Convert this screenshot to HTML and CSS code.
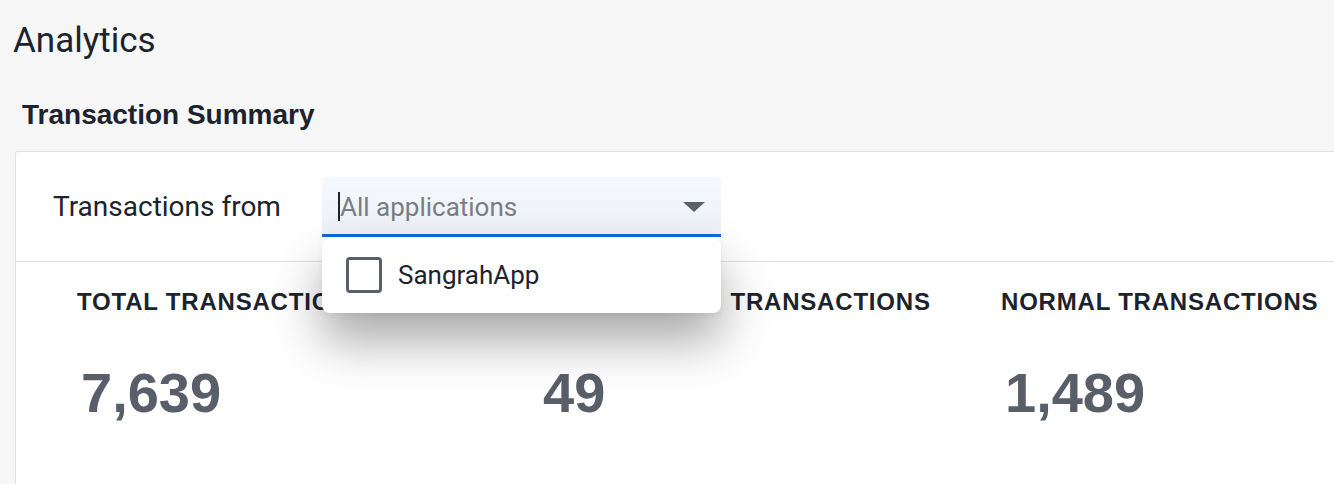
FILE: index.html
```html
<!DOCTYPE html>
<html>
<head>
	<meta http-equiv="Content-Type" content="text/html; charset=utf-8">
	<title>Analytics</title>
	<link rel="stylesheet" href="styles.css">
</head>
<body>
	<h1 class="page-title">Analytics</h1>
	<h2 class="section-title">Transaction Summary</h2>

	<div class="card">
		<div class="card-head">
			<span class="from-label">Transactions from</span>
			<div class="select">
				<div class="select-field">
					<span class="cursor"></span>
					<span class="placeholder">All applications</span>
					<span class="caret"></span>
				</div>
				<ul class="menu">
					<li class="menu-item">
						<span class="checkbox"></span>
						<span>SangrahApp</span>
					</li>
				</ul>
			</div>
		</div>

		<div class="stats">
			<div class="stat">
				<div class="stat-label">TOTAL TRANSACTIONS</div>
				<div class="stat-value">7,639</div>
			</div>
			<div class="stat">
				<div class="stat-label stat-label-wide">FRAUDULENT TRANSACTIONS</div>
				<div class="stat-value">49</div>
			</div>
			<div class="stat">
				<div class="stat-label">NORMAL TRANSACTIONS</div>
				<div class="stat-value">1,489</div>
			</div>
		</div>
	</div>
</body>
</html>
```

FILE: styles.css
```css
html,body{
	margin:0;
	padding:0;
	overflow:hidden;
}
body{
	background:#f6f6f6;
	color:#1c232c;
	font-family:Roboto, "Liberation Sans", sans-serif;
	height:484px;
}
.page-title{
	margin:0;
	padding:21px 0 0 13px;
	font-size:35px;
	font-weight:400;
	line-height:40px;
}
.section-title{
	margin:0 0 20px;
	padding:38px 0 0 22px;
	font-family:"Liberation Sans", Arial, sans-serif;
	font-size:28px;
	font-weight:700;
	line-height:32px;
}
.card{
	margin-left:15px;
	width:1400px;
	height:340px;
	background:#fff;
	border:1px solid #dde0e4;
	border-bottom:0;
	border-radius:3px 0 0 0;
}
.card-head{
	height:109px;
	display:flex;
	align-items:center;
	padding-left:37px;
	border-bottom:1px solid #dde0e4;
}
.from-label{
	font-size:28px;
	line-height:32px;
	width:269px;
}
.select{
	position:relative;
	width:399px;
}
.select-field{
	height:57px;
	display:flex;
	align-items:center;
	padding-left:16px;
	background:linear-gradient(#f5f9fd, #edf0f4);
	border-bottom:3px solid #0f69e0;
	border-radius:4px 4px 0 0;
}
.cursor{
	width:2px;
	height:29px;
	background:#1c232c;
	margin-top:2px;
}
.placeholder{
	flex:1;
	font-size:26px;
	line-height:30px;
	color:#7a7d82;
	margin-top:3px;
}
.caret{
	width:0;
	height:0;
	border-left:11px solid transparent;
	border-right:11px solid transparent;
	border-top:10px solid #5b5f66;
	margin-right:16px;
	margin-top:4px;
}
.menu{
	position:absolute;
	left:0;
	top:61px;
	width:399px;
	margin:0;
	padding:0;
	list-style:none;
	background:#fff;
	border-radius:8px;
	box-shadow:0 28px 50px rgba(0,0,0,.34), 0 2px 6px rgba(0,0,0,.06);
	z-index:2;
}
.menu-item{
	height:75px;
	display:flex;
	align-items:center;
	padding-left:24px;
	font-size:26px;
}
.checkbox{
	box-sizing:border-box;
	width:36px;
	height:36px;
	border:3px solid #5a6069;
	border-radius:4px;
	margin-right:16px;
}
.stats{
	display:grid;
	grid-template-columns:462px 462px 462px;
	padding:26px 0 0 61px;
}
.stat-label{
	font-family:"Liberation Sans", Arial, sans-serif;
	font-weight:700;
	font-size:24px;
	letter-spacing:0.8px;
	line-height:28px;
}
.stat-label-wide{
	word-spacing:12px;
}
.stat-value{
	font-family:"Liberation Sans", Arial, sans-serif;
	font-weight:700;
	font-size:56px;
	color:#585f69;
	line-height:64px;
	margin-top:45px;
	padding-left:4px;
}
```
